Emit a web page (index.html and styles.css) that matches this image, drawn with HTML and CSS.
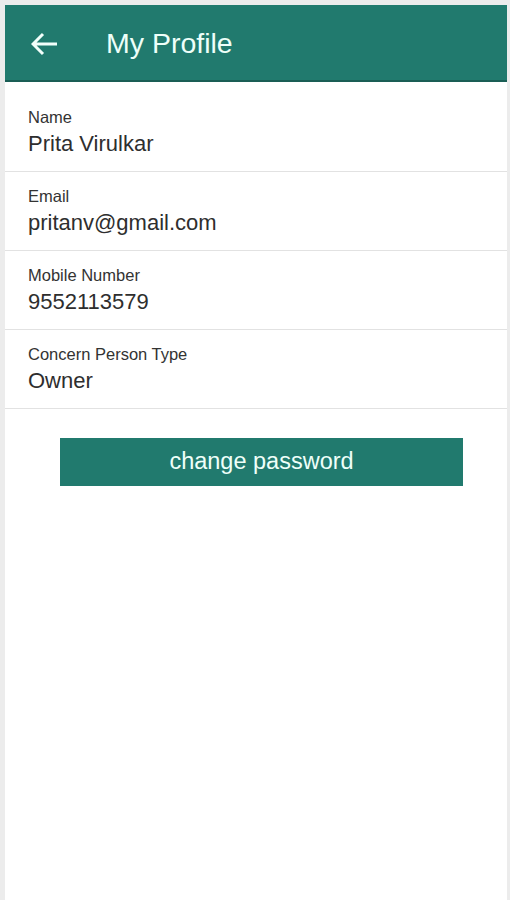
FILE: index.html
```html
<!DOCTYPE html>
<html lang="en">
<head>
<meta charset="utf-8">
<title>My Profile</title>
<link rel="stylesheet" href="styles.css">
</head>
<body>
<div class="app">
  <header class="topbar">
    <svg class="back" width="28" height="24" viewBox="0 0 28 24" aria-hidden="true">
      <path d="M12 2 L2 12 L12 22 M2 12 H26" fill="none" stroke="#f2fffb" stroke-width="3" stroke-linejoin="miter" stroke-linecap="butt"/>
    </svg>
    <h1 class="title">My Profile</h1>
  </header>
  <main class="list">
    <div class="row">
      <div class="label">Name</div>
      <div class="value">Prita Virulkar</div>
    </div>
    <div class="row">
      <div class="label">Email</div>
      <div class="value">pritanv@gmail.com</div>
    </div>
    <div class="row">
      <div class="label">Mobile Number</div>
      <div class="value">9552113579</div>
    </div>
    <div class="row">
      <div class="label">Concern Person Type</div>
      <div class="value">Owner</div>
    </div>
    <div class="actions">
      <button class="btn" type="button">change password</button>
    </div>
  </main>
</div>
</body>
</html>
```

FILE: styles.css
```css
html, body {
  margin: 0;
  height: 100%;
}
body {
  background: #ececec;
  padding: 5px 3px 0 5px;
  box-sizing: border-box;
  font-family: "Liberation Sans", Arial, sans-serif;
}
.app {
  background: #ffffff;
  height: 100%;
  display: flex;
  flex-direction: column;
}
.topbar {
  height: 75px;
  background: #217a6e;
  border-bottom: 2px solid #1a5e55;
  display: flex;
  align-items: center;
  flex-shrink: 0;
}
.back {
  margin-left: 26px;
  margin-top: 2px;
  display: block;
}
.title {
  margin: 2px 0 0 47px;
  font-size: 28.5px;
  font-weight: normal;
  color: #eefff9;
}
.list {
  padding-top: 11px;
}
.row {
  padding: 14px 0 13px 23px;
  border-bottom: 1px solid #e2e2e2;
}
.label {
  font-size: 16.5px;
  line-height: 20px;
  color: #333333;
  margin-bottom: 3px;
}
.value {
  font-size: 22px;
  line-height: 28px;
  color: #2e2e2e;
}
.actions {
  padding: 29px 0 0 55px;
}
.btn {
  display: block;
  width: 403px;
  height: 48px;
  border: none;
  margin: 0;
  padding: 0 0 2px;
  background: #217a6e;
  color: #eefff9;
  font-family: "Liberation Sans", Arial, sans-serif;
  font-size: 23.5px;
}
```
